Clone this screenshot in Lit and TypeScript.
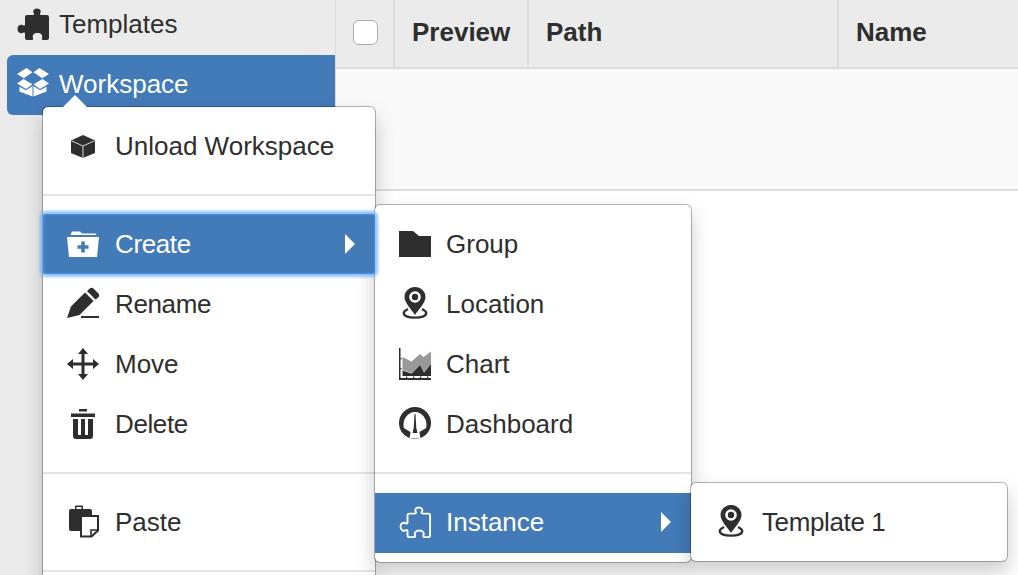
import { LitElement, html, css, svg, TemplateResult } from "lit";
import { customElement } from "lit/decorators.js";

const PUZZLE = "M10 7H16C17 7 17.5 6 16.8 5C15.5 3.5 16.5 .5 20 .5C23.5 .5 24.5 3.5 23.2 5C22.5 6 23 7 24 7H30A2 2 0 0 1 32 9V30A2 2 0 0 1 30 32H26C25 32 24.6 31 25 30C26 27 24 25 20.5 25C17 25 15 27 16 30C16.4 31 16 32 15 32H10A2 2 0 0 1 8 30V25.5C8 24.5 7 24 6 24.8C4 26 .5 25 .5 21C.5 17 4 16 6 17.2C7 18 8 17.5 8 16.5V9A2 2 0 0 1 10 7Z";

const pinShapes = svg`
  <path fill="currentColor" d="M16 -1C10 -1 5.5 3.5 5.5 9C5.5 15 13 22 16 27C19 22 26.5 15 26.5 9C26.5 3.5 22 -1 16 -1Z"/>
  <circle cx="16" cy="9" r="5.8" fill="var(--hole)"/>
  <circle cx="16" cy="9" r="3.2" fill="currentColor"/>
  <path fill="none" stroke="currentColor" stroke-width="2.4" d="M9 21C6 22.500 4.500 24 4.800 25.500C5.200 28.300 10 29.600 16 29.600C22 29.600 26.800 28.300 27.200 25.500C27.500 24 26 22.500 23 21"/>`;

const ICONS: Record<string, TemplateResult> = {
  puzzle: svg`<path fill="currentColor" d=${PUZZLE}/>`,
  puzzleOutline: svg`<path fill="none" stroke="currentColor" stroke-width="2" transform="translate(1 1) scale(.94)" d=${PUZZLE}/>`,
  box: svg`<g fill="currentColor">
    <path d="M0 6L9.500 0L15.500 4.300L6.800 10.200Z"/><path d="M32 6L22.500 0L16.500 4.300L25.200 10.200Z"/>
    <path d="M6.500 11L0 15.500L9 21L15.500 16.300Z"/><path d="M25.500 11L32 15.500L23 21L16.500 16.300Z"/>
    <path d="M2.500 18.800L9 22.300L15.500 18V28.500L2.500 23.500Z"/><path d="M29.500 18.800L23 22.300L16.500 18V28.500L29.500 23.500Z"/></g>`,
  cube: svg`<path fill="currentColor" d="M16 5L28 10.500V23L16 28L4 23V10.500Z"/>
    <path fill="none" stroke="#d8d8d8" stroke-width="1" d="M4.500 10.800L16 16L27.500 10.800M16 16V28"/>`,
  folderPlus: svg`<path fill="currentColor" d="M3.500 7L5 3.500H13L15 5.500H28.500L29.500 7Z"/>
    <path fill="currentColor" d="M0 9H32L30 29H2Z"/>
    <path fill="#437ab8" d="M14.200 13.500H17.800V17.200H21.500V20.800H17.800V24.500H14.200V20.800H10.500V17.200H14.200Z"/>`,
  pencil: svg`<g fill="currentColor"><path d="M0 30L4 18.500L18 4.500L26.500 13L12.500 27Z"/>
    <path d="M20 3L22.500 .8A3 3 0 0 1 26.700 .8L31.200 5.300A3 3 0 0 1 31.200 9.500L28.500 11.500Z"/>
    <rect x="14" y="28" width="18" height="2"/></g>`,
  move: svg`<path fill="currentColor" d="M16 0L21 6H17.500V14.500H26V11L32 16L26 21V17.500H17.500V26H21L16 32L11 26H14.500V17.500H6V21L0 16L6 11V14.500H14.500V6H11Z"/>`,
  trash: svg`<g fill="currentColor"><rect x="12" y="1" width="8" height="2.500"/><rect x="4" y="5.500" width="24" height="3.500"/>
    <path d="M6 11H11V27H14V11H18V27H21V11H26V28A3 3 0 0 1 23 31H9A3 3 0 0 1 6 28Z"/></g>`,
  paste: svg`<g fill="currentColor"><path d="M2 5A2 2 0 0 1 4 3H8V0.500A1 1 0 0 1 9 -.5H15A1 1 0 0 1 16 .5V3H23A2 2 0 0 1 25 5V9H13V25H4A2 2 0 0 1 2 23Z"/></g>
    <path fill="#fff" d="M9.500 1H14.500V3H9.500Z"/>
    <path fill="#fff" stroke="currentColor" stroke-width="2" d="M14 10H31V24.500L24.500 30.500H14Z"/>
    <path fill="none" stroke="currentColor" stroke-width="1.600" d="M31 24H24V30.500"/>`,
  folder: svg`<path fill="currentColor" d="M0 3H14L20 8H32V29H0Z"/>`,
  pin: pinShapes,
  chart: svg`<path fill="currentColor" d="M0 0H1.500V30H32V32H0Z"/>
    <path fill="currentColor" d="M7 28.500h1.200v1.500H7ZM14 28.500h1.200v1.500H14ZM21 28.500h1.200v1.500H21ZM28 28.500h1.200v1.500H28ZM1.500 20h1.200v1.200H1.500ZM1.500 10h1.200v1.200H1.500Z"/>
    <path fill="#999" d="M3.500 9L12.500 13.500L21 6L24.500 9L32 3.500V16L25 24L21 17L12.500 25L3.500 22Z"/>
    <path fill="currentColor" d="M3.500 22.500L12.500 25.500L21 17L25 24.500L32 16V28H3.500Z"/>`,
  gauge: svg`<circle cx="16" cy="15" r="16" fill="currentColor"/>
    <path fill="#fff" d="M4.800 20C3 11 9 4 16 4C23 4 29 11 27.200 20L20.500 24L21.500 30.500H10.500L11.500 24Z"/>
    <path fill="currentColor" d="M15.500 6H16.500L17.300 20L18.500 25H13.500L14.700 20Z"/>`,
};

const icon = (n: string) => html`<svg class="ico" viewBox="0 0 32 32">${ICONS[n]}</svg>`;

@customElement("app-root")
export class AppRoot extends LitElement {
  static styles = css`
    :host { display: block; position: relative; width: 1018px; height: 575px; overflow: hidden;
      font-family: "Liberation Sans", Arial, sans-serif; font-size: 26px; color: #2e2e2e; background: #fff; --hole: #fff; }
    * { box-sizing: border-box; }
    .page { display: flex; height: 575px; }
    .ico { width: 32px; height: 32px; flex: none; overflow: visible; display: block; }
    .side { width: 335px; flex: none; background: #ebebeb; display: flex; flex-direction: column; }
    .tree { display: flex; align-items: center; gap: 10px; height: 60px; }
    .tree.t { padding-left: 17px; height: 48px; margin-bottom: 7px; }
    .tree.w { margin-left: 7px; padding-left: 10px; padding-bottom: 2px; background: #437ab8; color: #fff; border-radius: 6px 0 0 6px; --hole: #437ab8; }
    .main { flex: 1; border-left: 1px solid #ddd; display: flex; flex-direction: column; }
    .head { display: grid; grid-template-columns: 59px 134px 310px 1fr; height: 69px; background: #ebebeb; border-bottom: 2px solid #dcdcdc; font-weight: 700; }
    .th { display: flex; align-items: center; padding-left: 17px; border-right: 2px solid #dcdcdc; padding-bottom: 2px; }
    .th:last-child { border-right: 0; }
    .th.p { padding-left: 17px; }
    .check { appearance: none; margin: 0; width: 25px; height: 25px; background: #fff; border: 1px solid #aaa; border-radius: 6px; }
    .band { height: 122px; background: #f9f9f9; border-bottom: 2px solid #dcdcdc; }
    .menu { position: absolute; background: #fff; background-clip: padding-box; border: 1px solid rgba(0,0,0,.28); border-radius: 6px;
      box-shadow: 0 10px 20px rgba(0,0,0,.2); padding: 9px 0; }
    .m1 { left: 42px; top: 106px; width: 334px; }
    .m1::before { content: ""; position: absolute; left: 20px; top: -12px; border-left: 12px solid transparent; border-right: 12px solid transparent; border-bottom: 12px solid #fff; }
    .m2 { left: 374px; top: 204px; width: 318px; }
    .m2 .item { gap: 15px; }
    .m3 { left: 690px; top: 482px; width: 318px; }
    .m3 .item { gap: 15px; }
    .item { position: relative; display: flex; align-items: center; gap: 16px; height: 60px; padding-left: 24px; }
    .item.on { background: #437ab8; color: #fff; --hole: #437ab8; }
    .item.focus { box-shadow: inset 0 0 2px 1px #4a90e8, 0 0 3px 3px rgba(100,170,250,.7); z-index: 1; border-radius: 3px; }
    .item.low { margin-top: 19px; padding-bottom: 2px; }
    .tight span { letter-spacing: -.38px; }
    .caret { position: absolute; right: 20px; top: 20px; border-left: 10px solid #fff; border-top: 10px solid transparent; border-bottom: 10px solid transparent; }
    .low .caret { top: 19px; }
    .div { height: 2px; margin: 18px 0; background: #e4e4e4; }
    .div.flush { margin-bottom: 0; }
  `;

  private item(ic: string, label: string, cls = "", caret = false) {
    return html`<div class="item ${cls}">${icon(ic)}<span>${label}</span>${caret ? html`<i class="caret"></i>` : ""}</div>`;
  }

  render() {
    return html`
      <div class="page">
        <aside class="side">
          <div class="tree t">${icon("puzzle")}<span>Templates</span></div>
          <div class="tree w">${icon("box")}<span>Workspace</span></div>
        </aside>
        <section class="main">
          <div class="head">
            <div class="th p"><input class="check" type="checkbox" /></div>
            <div class="th p">Preview</div>
            <div class="th">Path</div>
            <div class="th">Name</div>
          </div>
          <div class="band"></div>
        </section>
      </div>
      <div class="menu m1">
        ${this.item("cube", "Unload Workspace")}
        <div class="div"></div>
        ${this.item("folderPlus", "Create", "on focus tight", true)}
        ${this.item("pencil", "Rename", "tight")}
        ${this.item("move", "Move")}
        ${this.item("trash", "Delete", "tight")}
        <div class="div"></div>
        ${this.item("paste", "Paste")}
        <div class="div"></div>
      </div>
      <div class="menu m2">
        ${this.item("folder", "Group")}
        ${this.item("pin", "Location")}
        ${this.item("chart", "Chart")}
        ${this.item("gauge", "Dashboard")}
        <div class="div flush"></div>
        ${this.item("puzzleOutline", "Instance", "on low", true)}
      </div>
      <div class="menu m3">
        ${this.item("pin", "Template 1", "tight")}
      </div>
    `;
  }
}
